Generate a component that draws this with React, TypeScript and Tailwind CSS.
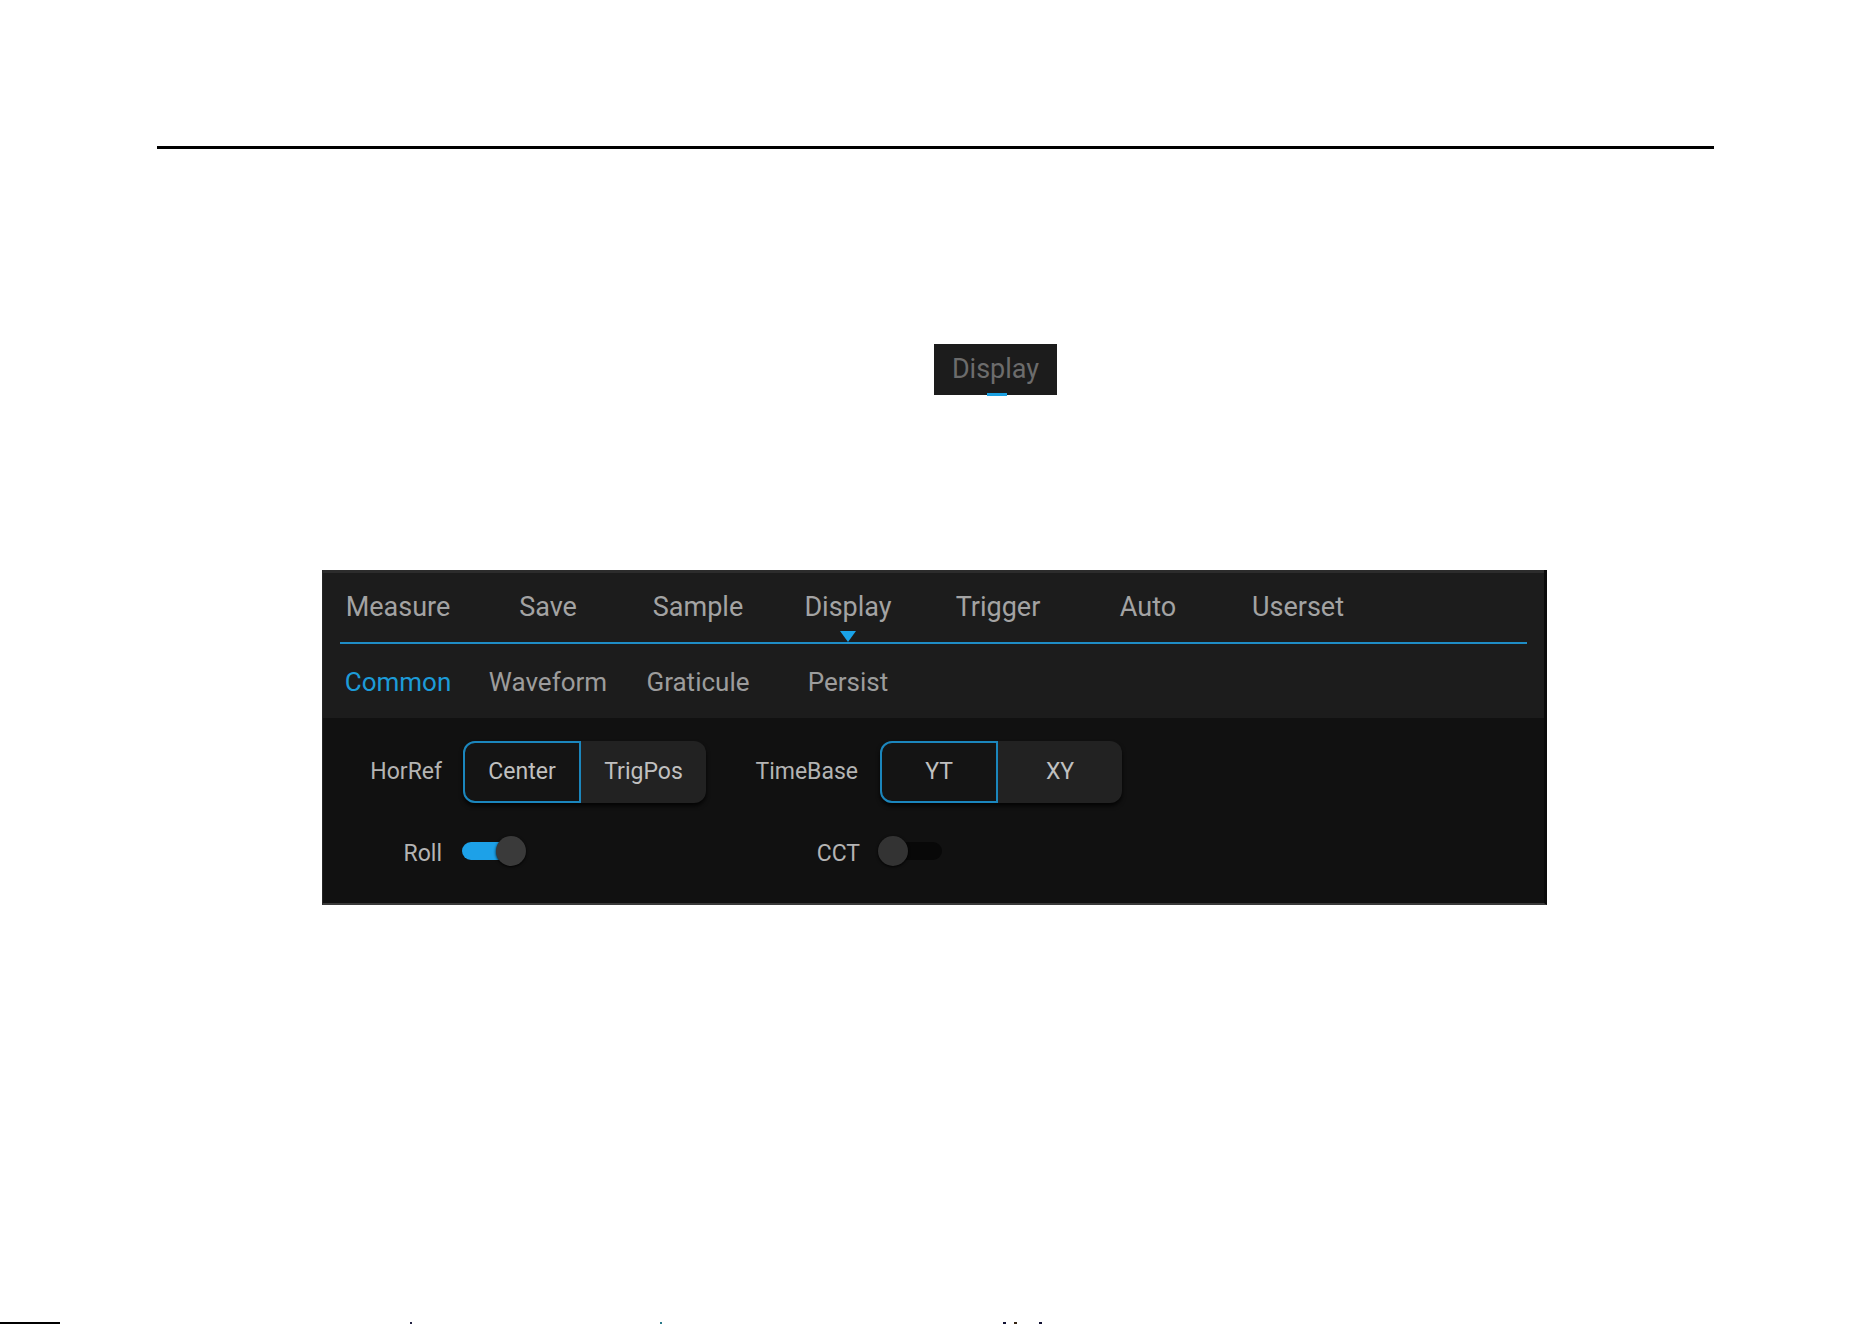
import React, { useState } from 'react';

const topMenu = ['Measure', 'Save', 'Sample', 'Display', 'Trigger', 'Auto', 'Userset'];
const subTabs = ['Common', 'Waveform', 'Graticule', 'Persist'];

interface SegmentedProps {
  options: string[];
  value: string;
  onChange: (v: string) => void;
  widths: [string, string];
}

const Segmented: React.FC<SegmentedProps> = ({ options, value, onChange, widths }) => {
  return (
    <div className="flex h-[62px] rounded-[12px] bg-[#222222] shadow-[0_3px_4px_rgba(0,0,0,0.8)]">
      {options.map((opt, i) => {
        const active = opt === value;
        return (
          <button
            key={opt}
            onClick={() => onChange(opt)}
            className={
              (i === 0 ? widths[0] + ' rounded-l-[12px] ' : widths[1] + ' rounded-r-[12px] ') +
              (active
                ? 'border-2 border-[#1b86bd] bg-[#141414] '
                : 'border-2 border-transparent ') +
              'flex items-center justify-center text-[23px] text-[#c0c0c0]'
            }
          >
            {opt}
          </button>
        );
      })}
    </div>
  );
};

const Toggle: React.FC<{ on: boolean; onToggle: () => void }> = ({ on, onToggle }) => {
  return (
    <button onClick={onToggle} className="relative w-[64px] h-[30px]">
      {on ? (
        <>
          <span className="absolute left-0 top-[6px] w-[50px] h-[18px] rounded-full bg-[#1da1e8]" />
          <span className="absolute right-0 top-0 w-[30px] h-[30px] rounded-full bg-[#3a3a3a] shadow-[0_1px_3px_rgba(0,0,0,0.9)]" />
        </>
      ) : (
        <>
          <span className="absolute left-[8px] right-0 top-[6px] h-[18px] rounded-full bg-[#080808]" />
          <span className="absolute left-0 top-0 w-[30px] h-[30px] rounded-full bg-[#333333] shadow-[0_1px_3px_rgba(0,0,0,0.9)]" />
        </>
      )}
    </button>
  );
};

export default function App() {
  const [menu, setMenu] = useState('Display');
  const [tab, setTab] = useState('Common');
  const [horRef, setHorRef] = useState('Center');
  const [timeBase, setTimeBase] = useState('YT');
  const [roll, setRoll] = useState(true);
  const [cct, setCct] = useState(false);

  return (
    <div
      className="w-full h-[1324px] bg-white flex flex-col overflow-hidden"
      style={{ fontFamily: 'Roboto, "Liberation Sans", sans-serif' }}
    >
      {/* Top rule */}
      <div className="mt-[146px] ml-[157px] w-[1557px] h-[3px] bg-black" />

      {/* Display tooltip */}
      <div className="relative mt-[195px] ml-[934px] w-[123px] h-[51px] bg-[#1c1c1c] flex items-center justify-center">
        <span className="text-[27px] text-[#6c6c6c] leading-none">Display</span>
        <span className="absolute bottom-[-1px] left-[53px] w-[20px] h-[3px] bg-[#1ba1e2]" />
      </div>

      {/* Panel */}
      <div className="mt-[175px] ml-[322px] w-[1225px] h-[335px] flex flex-col border-l border-[#262626] border-r-[3px] border-r-[#0a0a0a] border-b-2 border-b-[#3a3a3a]">
        {/* Header */}
        <div className="bg-[#1c1c1c] border-t-[3px] border-[#2c2c2c] flex flex-col">
          <div className="flex h-[69px]">
            {topMenu.map((m) => (
              <button
                key={m}
                onClick={() => setMenu(m)}
                className="relative w-[150px] flex items-center justify-center text-[27px] text-[#a3a3a3]"
              >
                {m}
                {m === menu && (
                  <svg className="absolute bottom-0 left-1/2 -translate-x-1/2" width="16" height="11" viewBox="0 0 16 11">
                    <polygon points="0,0 16,0 8,11" fill="#1aa3e8" />
                  </svg>
                )}
              </button>
            ))}
          </div>
          <div className="mx-[17px] h-[2px] bg-[#1f8dc6]" />
          <div className="flex h-[74px] pt-[2px]">
            {subTabs.map((t) => (
              <button
                key={t}
                onClick={() => setTab(t)}
                className={
                  'w-[150px] flex items-center justify-center text-[26px] ' +
                  (t === tab ? 'text-[#1d9bd8]' : 'text-[#9c9c9c]')
                }
              >
                {t}
              </button>
            ))}
          </div>
        </div>

        {/* Body */}
        <div className="flex-1 bg-[#111111] pt-[23px] flex flex-col gap-[33px]">
          <div className="flex items-center">
            <span className="w-[119px] text-right text-[23px] text-[#b4b4b4]">HorRef</span>
            <div className="ml-[21px]">
              <Segmented
                options={['Center', 'TrigPos']}
                value={horRef}
                onChange={setHorRef}
                widths={['w-[118px]', 'w-[125px]']}
              />
            </div>
            <span className="w-[152px] text-right text-[23px] text-[#b4b4b4]">TimeBase</span>
            <div className="ml-[22px]">
              <Segmented
                options={['YT', 'XY']}
                value={timeBase}
                onChange={setTimeBase}
                widths={['w-[118px]', 'w-[124px]']}
              />
            </div>
          </div>
          <div className="flex items-center">
            <span className="w-[119px] text-right text-[23px] text-[#b4b4b4]">Roll</span>
            <div className="ml-[20px]">
              <Toggle on={roll} onToggle={() => setRoll(!roll)} />
            </div>
            <span className="w-[334px] text-right text-[23px] text-[#b4b4b4]">CCT</span>
            <div className="ml-[18px]">
              <Toggle on={cct} onToggle={() => setCct(!cct)} />
            </div>
          </div>
        </div>
      </div>

      {/* Clipped marks along the bottom edge */}
      <div className="mt-auto h-[2px] flex items-end">
        <span className="w-[60px] h-[2px] bg-black" />
        <span className="ml-[350px] w-[2px] h-[2px] bg-[#222244]" />
        <span className="ml-[248px] w-[2px] h-[2px] bg-[#2a7a8a]" />
        <span className="ml-[341px] w-[3px] h-[2px] bg-[#111133]" />
        <span className="ml-[8px] w-[3px] h-[2px] bg-[#332211]" />
        <span className="ml-[22px] w-[3px] h-[2px] bg-[#111133]" />
      </div>
    </div>
  );
}
